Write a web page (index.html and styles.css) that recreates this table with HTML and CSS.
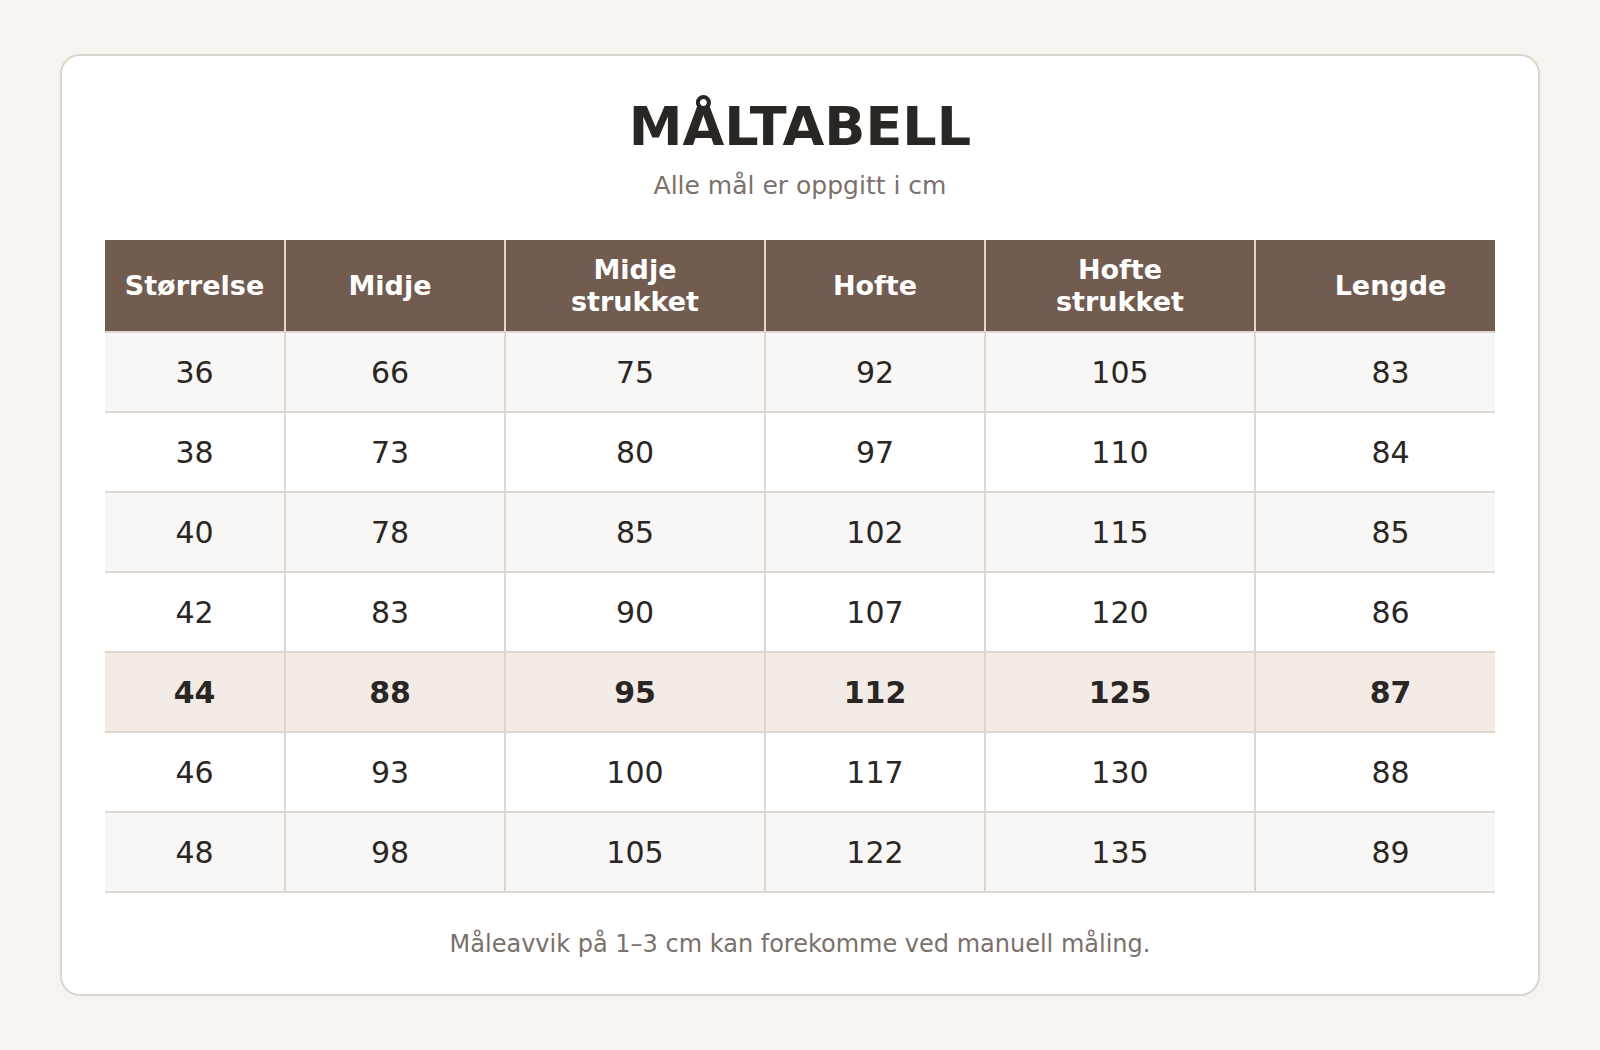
FILE: index.html
```html
<!DOCTYPE html>
<html lang="no">
<head>
<meta charset="utf-8">
<title>Måltabell</title>
<link rel="stylesheet" href="styles.css">
</head>
<body>
<main class="card">
  <h1 class="title">MÅLTABELL</h1>
  <p class="subtitle">Alle mål er oppgitt i cm</p>
  <table class="size-table">
    <colgroup>
      <col class="c-size">
      <col class="c-waist">
      <col class="c-waist-s">
      <col class="c-hip">
      <col class="c-hip-s">
      <col class="c-length">
    </colgroup>
    <thead>
      <tr class="head-row">
        <th>Størrelse</th>
        <th class="col-waist">Midje</th>
        <th>Midje<br>strukket</th>
        <th>Hofte</th>
        <th>Hofte<br>strukket</th>
        <th class="col-length">Lengde</th>
      </tr>
    </thead>
    <tbody>
      <tr class="row odd"><td>36</td><td class="col-waist">66</td><td>75</td><td>92</td><td>105</td><td class="col-length">83</td></tr>
      <tr class="row"><td>38</td><td class="col-waist">73</td><td>80</td><td>97</td><td>110</td><td class="col-length">84</td></tr>
      <tr class="row odd"><td>40</td><td class="col-waist">78</td><td>85</td><td>102</td><td>115</td><td class="col-length">85</td></tr>
      <tr class="row"><td>42</td><td class="col-waist">83</td><td>90</td><td>107</td><td>120</td><td class="col-length">86</td></tr>
      <tr class="row highlight"><td>44</td><td class="col-waist">88</td><td>95</td><td>112</td><td>125</td><td class="col-length">87</td></tr>
      <tr class="row"><td>46</td><td class="col-waist">93</td><td>100</td><td>117</td><td>130</td><td class="col-length">88</td></tr>
      <tr class="row odd"><td>48</td><td class="col-waist">98</td><td>105</td><td>122</td><td>135</td><td class="col-length">89</td></tr>
    </tbody>
  </table>
  <p class="note">Måleavvik på 1–3 cm kan forekomme ved manuell måling.</p>
</main>
</body>
</html>
```

FILE: styles.css
```css
html, body {
  margin: 0;
  padding: 0;
}

body {
  background: #f7f4ef;
  font-family: "DejaVu Sans", "Noto Sans", sans-serif;
  color: #2a2623;
  padding: 54px 60px 0;
}

.card {
  background: #ffffff;
  border: 2px solid #ddd5cc;
  border-radius: 20px;
  padding: 40px 43px 36px;
  display: flex;
  flex-direction: column;
  align-items: center;
}

.title {
  margin: 0;
  font-size: 54px;
  font-weight: 700;
  line-height: 62px;
  color: #2a2623;
}

.subtitle {
  margin: 13px 0 0;
  font-size: 25px;
  line-height: 29px;
  color: #7b706a;
}

.size-table {
  margin-top: 40px;
  width: 1390px;
  table-layout: fixed;
  border-collapse: separate;
  border-spacing: 0;
}

.c-size { width: 179px; }
.c-waist { width: 220px; }
.c-waist-s { width: 260px; }
.c-hip { width: 220px; }
.c-hip-s { width: 270px; }
.c-length { width: 241px; }

.size-table th,
.size-table td {
  text-align: center;
  vertical-align: middle;
  border-bottom: 2px solid #ded6cf;
  padding: 0;
}

.size-table th + th,
.size-table td + td {
  border-left: 2px solid #ded6cf;
}

.head-row {
  height: 93px;
}

.size-table th {
  background: #725c4f;
  color: #ffffff;
  font-size: 27px;
  font-weight: 700;
  line-height: 32px;
}

.row {
  height: 80px;
}

.size-table td {
  font-size: 30px;
  line-height: 35px;
  background: #ffffff;
}

.row.odd td {
  background: #f8f7f5;
}

.row.highlight td {
  background: #f3ebe6;
  font-weight: 700;
}

.size-table .col-waist {
  padding-right: 10px;
}

.size-table .col-length {
  padding-left: 30px;
}

.note {
  margin: 37px 0 0;
  font-size: 24px;
  line-height: 28px;
  color: #7b706a;
}
```
